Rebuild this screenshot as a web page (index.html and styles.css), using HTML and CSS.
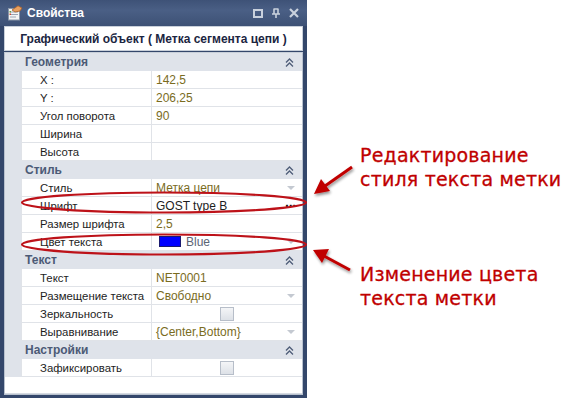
FILE: index.html
```html
<!DOCTYPE html>
<html lang="ru">
<head>
<meta charset="utf-8">
<link rel="stylesheet" href="styles.css">
</head>
<body>
<div class="page">
  <div class="window">
    <div class="titlebar">
      <svg class="title-icon" width="16" height="16" viewBox="0 0 16 16">
        <rect x="1.5" y="3.5" width="11" height="11.5" fill="#f4f4f4" stroke="#8a96a8"/>
        <line x1="3" y1="7" x2="11" y2="7" stroke="#9aa4b4"/>
        <line x1="3" y1="9.5" x2="11" y2="9.5" stroke="#9aa4b4"/>
        <line x1="3" y1="12" x2="9" y2="12" stroke="#9aa4b4"/>
        <rect x="2.5" y="6" width="1.5" height="1.5" fill="#5aa040"/>
        <rect x="2.5" y="8.5" width="1.5" height="1.5" fill="#d04030"/>
        <path d="M5 5 L11 0.8 L15 3 L13 6 L8 7 Z" fill="#e8a060" stroke="#a8602a" stroke-width="0.8"/>
      </svg>
      <span class="title-text">Свойства</span>
      <div class="title-buttons">
        <svg width="10" height="9" viewBox="0 0 10 9"><rect x="1" y="1" width="8" height="7" fill="none" stroke="#c9d1dd" stroke-width="2"/></svg>
        <svg width="8" height="10" viewBox="0 0 8 10"><path d="M2 0.5 V6 M6 0.5 V6 M2 1 H6 M0 6 H8 M4 6 V10" fill="none" stroke="#c9d1dd" stroke-width="1.6"/></svg>
        <svg width="10" height="10" viewBox="0 0 10 10"><path d="M1 1 L9 9 M9 1 L1 9" stroke="#c9d1dd" stroke-width="2.2"/></svg>
      </div>
    </div>
    <div class="objhead">Графический объект ( Метка сегмента цепи )</div>
    <div class="grid">
      <div class="cat"><span>Геометрия</span><svg class="chev" width="9" height="9" viewBox="0 0 9 9"><path d="M1 4.5 L4.5 1 L8 4.5 M1 8.5 L4.5 5 L8 8.5" fill="none" stroke="#4f5d78" stroke-width="1.3"/></svg></div>
      <div class="row"><div class="gut"></div><div class="name">X :</div><div class="val ro">142,5</div></div>
      <div class="row"><div class="gut"></div><div class="name">Y :</div><div class="val ro">206,25</div></div>
      <div class="row"><div class="gut"></div><div class="name">Угол поворота</div><div class="val ro">90</div></div>
      <div class="row"><div class="gut"></div><div class="name">Ширина</div><div class="val"></div></div>
      <div class="row"><div class="gut"></div><div class="name">Высота</div><div class="val"></div></div>

      <div class="cat"><span>Стиль</span><svg class="chev" width="9" height="9" viewBox="0 0 9 9"><path d="M1 4.5 L4.5 1 L8 4.5 M1 8.5 L4.5 5 L8 8.5" fill="none" stroke="#4f5d78" stroke-width="1.3"/></svg></div>
      <div class="row"><div class="gut"></div><div class="name">Стиль</div><div class="val ro">Метка цепи<span class="drop"></span></div></div>
      <div class="row"><div class="gut"></div><div class="name">Шрифт</div><div class="val">GOST type B<span class="dots">···</span></div></div>
      <div class="row"><div class="gut"></div><div class="name">Размер шрифта</div><div class="val ro">2,5</div></div>
      <div class="row"><div class="gut"></div><div class="name">Цвет текста</div><div class="val gray"><span class="swatch"></span>Blue<span class="drop"></span></div></div>

      <div class="cat"><span>Текст</span><svg class="chev" width="9" height="9" viewBox="0 0 9 9"><path d="M1 4.5 L4.5 1 L8 4.5 M1 8.5 L4.5 5 L8 8.5" fill="none" stroke="#4f5d78" stroke-width="1.3"/></svg></div>
      <div class="row"><div class="gut"></div><div class="name">Текст</div><div class="val ro">NET0001</div></div>
      <div class="row"><div class="gut"></div><div class="name">Размещение текста</div><div class="val ro">Свободно<span class="drop"></span></div></div>
      <div class="row"><div class="gut"></div><div class="name">Зеркальность</div><div class="val center"><span class="check"></span></div></div>
      <div class="row"><div class="gut"></div><div class="name">Выравнивание</div><div class="val ro">{Center,Bottom}<span class="drop"></span></div></div>

      <div class="cat"><span>Настройки</span><svg class="chev" width="9" height="9" viewBox="0 0 9 9"><path d="M1 4.5 L4.5 1 L8 4.5 M1 8.5 L4.5 5 L8 8.5" fill="none" stroke="#4f5d78" stroke-width="1.3"/></svg></div>
      <div class="row"><div class="gut"></div><div class="name">Зафиксировать</div><div class="val center"><span class="check"></span></div></div>
      <div class="empty"></div>
    </div>
  </div>

  <div class="notes">
    <p class="note note1">Редактирование<br>стиля текста метки</p>
    <p class="note note2">Изменение цвета<br>текста метки</p>
  </div>

  <svg class="overlay" width="567" height="398" viewBox="0 0 567 398">
    <defs>
      <filter id="sh" x="-20%" y="-20%" width="140%" height="140%">
        <feGaussianBlur in="SourceAlpha" stdDeviation="1.5"/>
        <feOffset dx="1" dy="2" result="b"/>
        <feComponentTransfer><feFuncA type="linear" slope="0.45"/></feComponentTransfer>
        <feMerge><feMergeNode/><feMergeNode in="SourceGraphic"/></feMerge>
      </filter>
    </defs>
    <ellipse cx="164" cy="202.5" rx="142" ry="10" fill="none" stroke="#bd1219" stroke-width="2.2"/>
    <ellipse cx="164" cy="244.5" rx="142" ry="10" fill="none" stroke="#bd1219" stroke-width="2.2"/>
    <g filter="url(#sh)">
      <line x1="352" y1="167" x2="325" y2="186" stroke="#c00000" stroke-width="3"/>
      <polygon points="314,194 321,179 330,191" fill="#c00000"/>
      <line x1="350" y1="270" x2="324" y2="256" stroke="#c00000" stroke-width="3"/>
      <polygon points="313,250 329,249 322,263" fill="#c00000"/>
    </g>
  </svg>
</div>
</body>
</html>
```

FILE: styles.css
```css
* { box-sizing: border-box; }
html, body { margin: 0; padding: 0; background: #ffffff; }
.page {
  position: relative;
  width: 567px;
  height: 398px;
  display: flex;
  font-family: "Liberation Sans", Arial, sans-serif;
}
.window {
  width: 307px;
  height: 398px;
  flex: none;
  background: #34476b;
  padding: 0 4px 3px 4px;
  display: flex;
  flex-direction: column;
}
.titlebar {
  height: 27px;
  margin: 0 -4px;
  padding: 0 8px 0 7px;
  display: flex;
  align-items: center;
  background: linear-gradient(#3e5277, #4a5f85 40%, #3d5175);
}
.title-icon { margin-right: 4px; margin-top: -1px; }
.title-text {
  color: #ffffff;
  font-weight: bold;
  font-size: 12px;
}
.title-buttons {
  margin-left: auto;
  display: flex;
  align-items: center;
  gap: 9px;
}
.objhead {
  height: 25px;
  background: #ffffff;
  border: 1px solid #c9d0da;
  display: flex;
  align-items: center;
  justify-content: center;
  color: #1b2541;
  font-weight: bold;
  font-size: 12px;
}
.grid {
  flex: 1;
  margin-top: 1px;
  background: #ffffff;
  border: 1px solid #b8c1ce;
  border-top-color: #c8cfd9;
  display: flex;
  flex-direction: column;
  font-size: 12px;
}
.cat {
  height: 18px;
  background: #dfe3ea;
  display: flex;
  align-items: center;
  padding: 0 8px 0 20px;
  color: #4c5a76;
  font-weight: bold;
  font-size: 12px;
}
.cat .chev { margin-left: auto; }
.row {
  height: 18px;
  display: flex;
}
.gut {
  width: 16px;
  background: #dfe3ea;
}
.name {
  width: 131px;
  padding-left: 18px;
  display: flex;
  align-items: center;
  white-space: nowrap;
  font-size: 11.4px;
  color: #1d1d1d;
  border-bottom: 1px solid #e0e3e8;
  border-right: 1px solid #e0e3e8;
  border-left: 1px solid #e0e3e8;
}
.val {
  flex: 1;
  display: flex;
  align-items: center;
  padding-left: 4px;
  padding-right: 6px;
  color: #1d1d1d;
  border-bottom: 1px solid #e0e3e8;
}
.val.ro { color: #7a6c1e; }
.val.gray { color: #5b6575; }
.val.center { justify-content: center; padding: 0; }
.drop {
  margin-left: auto;
  width: 0;
  height: 0;
  border-left: 4px solid transparent;
  border-right: 4px solid transparent;
  border-top: 4px solid #c4c9d1;
  margin-right: 1px;
}
.dots {
  margin-left: auto;
  font-weight: bold;
  color: #111;
  letter-spacing: -1px;
  font-size: 14px;
  line-height: 1;
}
.swatch {
  width: 22px;
  height: 11px;
  background: #0000ff;
  border: 1px solid #1a1a70;
  margin: 0 5px 0 3px;
}
.check {
  width: 14px;
  height: 14px;
  border: 1px solid #b7bec9;
  background: linear-gradient(#f4f5f7, #dde1e7);
}
.empty {
  height: 17px;
  border-bottom: 1px solid #d5dae2;
}
.notes {
  flex: 1;
  padding-left: 53px;
  white-space: nowrap;
}
.note {
  margin: 0;
  color: #c00000;
  font-family: "DejaVu Sans", Verdana, sans-serif;
  font-size: 19px;
  line-height: 24px;
  letter-spacing: 0.2px;
  -webkit-text-stroke: 0.3px #c00000;
}
.note1 { margin-top: 143px; }
.note2 { margin-top: 71px; }
.overlay {
  position: absolute;
  left: 0;
  top: 0;
  pointer-events: none;
}
```
